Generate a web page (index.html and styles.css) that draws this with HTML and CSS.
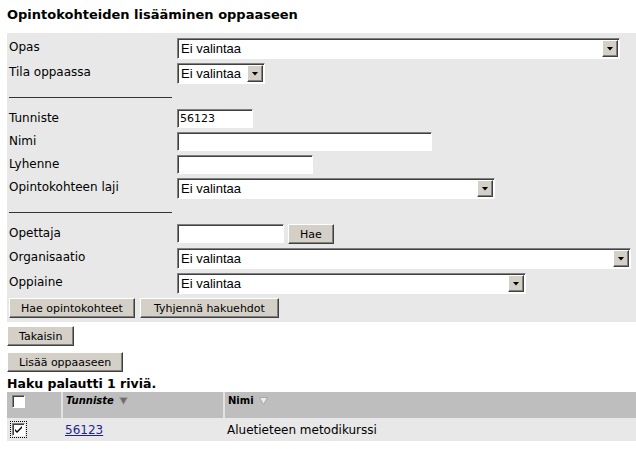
FILE: index.html
```html
<!DOCTYPE html>
<html lang="fi">
<head>
  <meta charset="UTF-8" />
  <title>Opintokohteiden lisääminen oppaaseen</title>
  <link rel="stylesheet" href="styles.css">
</head>
<body>
  <h1 class="otsikko">Opintokohteiden lisääminen oppaaseen</h1>

  <form class="haku">
    <div class="kentat">
      <label for="opas">Opas</label>
      <span class="valinta w-opas"><select id="opas"><option>Ei valintaa</option></select><span class="nuoli"></span></span>

      <label for="tila">Tila oppaassa</label>
      <span class="valinta w-tila"><select id="tila"><option>Ei valintaa</option></select><span class="nuoli"></span></span>

      <div class="erotin"></div>

      <label for="tunniste">Tunniste</label>
      <input type="text" id="tunniste" class="teksti w-tunniste" value="56123" />

      <label for="nimi">Nimi</label>
      <input type="text" id="nimi" class="teksti w-nimi" />

      <label for="lyhenne">Lyhenne</label>
      <input type="text" id="lyhenne" class="teksti w-lyhenne" />

      <label for="laji">Opintokohteen laji</label>
      <span class="valinta w-laji"><select id="laji"><option>Ei valintaa</option></select><span class="nuoli"></span></span>

      <div class="erotin"></div>

      <label for="opettaja">Opettaja</label>
      <span class="rivi">
        <input type="text" id="opettaja" class="teksti w-opettaja" />
        <button type="button" class="nappi">Hae</button>
      </span>

      <label for="organisaatio">Organisaatio</label>
      <span class="valinta w-org"><select id="organisaatio"><option>Ei valintaa</option></select><span class="nuoli"></span></span>

      <label for="oppiaine">Oppiaine</label>
      <span class="valinta w-oppiaine"><select id="oppiaine"><option>Ei valintaa</option></select><span class="nuoli"></span></span>
    </div>

    <div class="toiminnot">
      <button type="button" class="nappi">Hae opintokohteet</button>
      <button type="button" class="nappi">Tyhjennä hakuehdot</button>
    </div>
  </form>

  <div class="napit">
    <button type="button" class="nappi">Takaisin</button>
    <button type="button" class="nappi">Lisää oppaaseen</button>
  </div>

  <h2 class="tulos">Haku palautti 1 riviä.</h2>

  <table class="lista">
    <thead>
      <tr>
        <th class="sarake-valinta"><span class="ruutu"></span></th>
        <th class="sarake-tunniste"><i>Tunniste</i>
          <svg class="jarjestys" width="9" height="8" viewBox="0 0 9 8"><path d="M0.5 0.5h8l-4 7z" fill="#6b6b6b" stroke="#a0a0a0"/></svg>
        </th>
        <th>Nimi
          <svg class="jarjestys" width="9" height="8" viewBox="0 0 9 8"><path d="M0.5 0.5h8l-4 7z" fill="#ececec" stroke="#a8a8a8"/></svg>
        </th>
      </tr>
    </thead>
    <tbody>
      <tr>
        <td><span class="ruutu valittu"><svg width="9" height="9" viewBox="0 0 9 9"><path d="M1 4l2 2 5-5v2l-5 5-2-2z" fill="#000"/></svg></span></td>
        <td><a href="#">56123</a></td>
        <td>Aluetieteen metodikurssi</td>
      </tr>
    </tbody>
  </table>
</body>
</html>
```

FILE: styles.css
```css
body {
  margin: 0;
  padding: 0 0 0 7px;
  font-family: "DejaVu Sans", Verdana, sans-serif;
  font-size: 12px;
  color: #000;
  background: #fff;
}

.otsikko {
  margin: 0;
  padding-top: 7px;
  height: 33px;
  box-sizing: border-box;
  font-size: 13px;
  line-height: 16px;
  font-weight: bold;
}

.haku {
  margin: 0;
  background: #e8e8e8;
  padding: 5px 0 4px 2px;
}

.kentat {
  display: grid;
  grid-template-columns: 168px auto;
  row-gap: 4px;
  justify-items: start;
  align-items: start;
}

.kentat label {
  padding-top: 1px;
  line-height: 16px;
}

.erotin {
  grid-column: 1 / -1;
  width: 163px;
  height: 9px;
  margin-bottom: 7px;
  border-bottom: 1px solid #333;
}

.valinta {
  display: inline-flex;
  height: 21px;
  box-sizing: border-box;
  padding: 1px;
  border: 1px solid;
  border-color: #808080 #fff #fff #808080;
  box-shadow: inset 1px 1px #404040;
  background: #fff;
}

.valinta select {
  flex: 1;
  min-width: 0;
  appearance: none;
  -webkit-appearance: none;
  border: 0;
  outline: 0;
  background: transparent;
  padding: 0 0 0 2px;
  margin: 0;
  font-family: "Liberation Sans", Arial, sans-serif;
  font-size: 13px;
  color: #000;
}

.nuoli {
  flex: none;
  width: 16px;
  height: 17px;
  box-sizing: border-box;
  background: #d4d0c8;
  border: 1px solid;
  border-color: #fff #404040 #404040 #fff;
  box-shadow: inset -1px -1px #808080;
  display: flex;
  align-items: center;
  justify-content: center;
}

.nuoli::before {
  content: "";
  width: 7px;
  height: 4px;
  background: #000;
  clip-path: polygon(0 0, 100% 0, 50% 100%);
}

.w-opas { width: 443px; }
.w-tila { width: 88px; }
.w-laji { width: 318px; }
.w-org { width: 454px; }
.w-oppiaine { width: 349px; }

.teksti {
  height: 19px;
  box-sizing: border-box;
  margin: 0;
  padding: 0 2px;
  border: 1px solid;
  border-color: #808080 #fff #fff #808080;
  box-shadow: inset 1px 1px #404040;
  background: #fff;
  font-family: "DejaVu Sans", Verdana, sans-serif;
  font-size: 11px;
  color: #000;
  outline: 0;
}

.w-tunniste { width: 76px; }
.w-nimi { width: 255px; }
.w-lyhenne { width: 136px; }
.w-opettaja { width: 107px; }

.rivi {
  display: flex;
  gap: 4px;
}

.nappi {
  height: 20px;
  box-sizing: border-box;
  margin: 0;
  padding: 0 11px;
  background: #d4d0c8;
  border: 1px solid;
  border-color: #fff #404040 #404040 #fff;
  box-shadow: inset -1px -1px #808080;
  font-family: "DejaVu Sans", Verdana, sans-serif;
  font-size: 11px;
  color: #000;
  cursor: pointer;
}

.toiminnot {
  display: flex;
  gap: 5px;
  margin-top: 4px;
}

.toiminnot .nappi + .nappi {
  padding: 0 13px;
}

.napit {
  display: flex;
  flex-direction: column;
  align-items: flex-start;
  gap: 6px;
  padding-top: 4px;
}

.tulos {
  margin: 4px 0 0;
  font-size: 12.5px;
  line-height: 15px;
  font-weight: bold;
}

.lista {
  width: 100%;
  margin-top: 1px;
  border-collapse: collapse;
}

.lista th {
  height: 23px;
  padding: 3px 3px 0;
  background: #bebebe;
  text-align: left;
  vertical-align: top;
  font-size: 10px;
  font-weight: bold;
}

.lista th + th {
  border-left: 2px solid #e2e2e2;
}

.lista td {
  height: 23px;
  padding: 0 3px;
  background: #e8e8e8;
  vertical-align: middle;
}

.sarake-valinta { width: 48px; }
.sarake-tunniste { width: 154px; }

.jarjestys {
  vertical-align: -1px;
  margin-left: 2px;
}

.ruutu {
  display: inline-flex;
  align-items: center;
  justify-content: center;
  width: 13px;
  height: 13px;
  box-sizing: border-box;
  margin-left: 2px;
  border: 1px solid;
  border-color: #808080 #fff #fff #808080;
  box-shadow: inset 1px 1px #404040;
  background: #fff;
}

.valittu {
  outline: 1px dotted #000;
  outline-offset: 1px;
}

.lista a {
  color: #1f1f96;
}
```
